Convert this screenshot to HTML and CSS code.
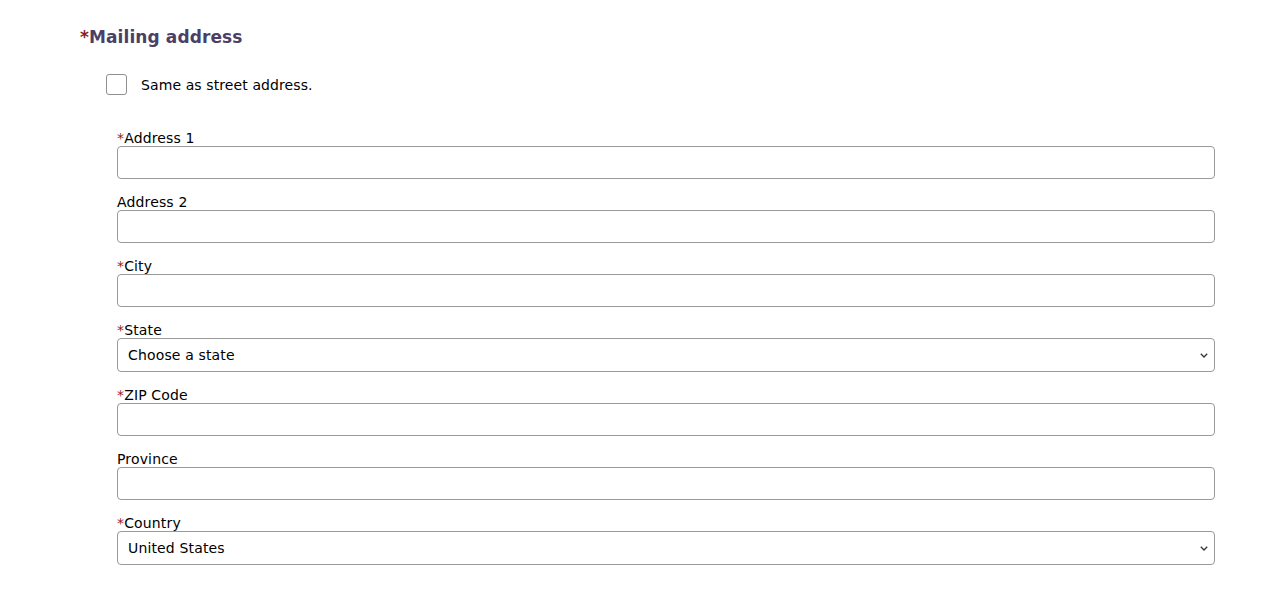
FILE: index.html
```html
<!DOCTYPE html>
<html lang="en">
<head>
<meta charset="utf-8">
<title>Mailing address</title>
<link rel="stylesheet" href="styles.css">
</head>
<body>
<form class="section">
  <h2 class="section-title"><span class="req">*</span>Mailing address</h2>
  <label class="check-row">
    <input type="checkbox" class="check">
    <span class="check-text">Same as street address.</span>
  </label>
  <div class="fields">
    <div class="field">
      <label class="field-label"><span class="req-sm">*</span>Address 1</label>
      <input type="text" class="text-input">
    </div>
    <div class="field">
      <label class="field-label">Address 2</label>
      <input type="text" class="text-input">
    </div>
    <div class="field">
      <label class="field-label"><span class="req-sm">*</span>City</label>
      <input type="text" class="text-input">
    </div>
    <div class="field">
      <label class="field-label"><span class="req-sm">*</span>State</label>
      <select class="select-input"><option>Choose a state</option></select>
    </div>
    <div class="field">
      <label class="field-label"><span class="req-sm">*</span>ZIP Code</label>
      <input type="text" class="text-input">
    </div>
    <div class="field">
      <label class="field-label">Province</label>
      <input type="text" class="text-input">
    </div>
    <div class="field">
      <label class="field-label"><span class="req-sm">*</span>Country</label>
      <select class="select-input"><option>United States</option></select>
    </div>
  </div>
</form>
</body>
</html>
```
FILE: styles.css
```css
html, body {
  margin: 0;
  padding: 0;
  background: #ffffff;
}
body {
  font-family: "DejaVu Sans", Verdana, sans-serif;
  color: #000;
}
.section {
  padding: 26px 52px 0 80px;
}
.section-title {
  margin: 0;
  font-size: 17px;
  line-height: 22px;
  font-weight: bold;
  color: #4b3f66;
  letter-spacing: 0.1px;
}
.req {
  color: #8b1c1c;
}
.req-sm {
  color: #9b1c1c;
}
.check-row {
  display: flex;
  align-items: center;
  gap: 14px;
  margin: 26px 0 0 26px;
  font-size: 14px;
  letter-spacing: 0.1px;
}
.check {
  appearance: none;
  margin: 0;
  width: 21px;
  height: 21px;
  border: 1px solid #8f8f8f;
  border-radius: 3px;
  background: #fff;
}
.fields {
  margin: 34px 0 0 37px;
  display: flex;
  flex-direction: column;
  gap: 14px;
}
.field {
  display: flex;
  flex-direction: column;
}
.field-label {
  font-size: 14px;
  line-height: 16px;
  padding-top: 1px;
  letter-spacing: 0.15px;
}
.text-input {
  box-sizing: border-box;
  height: 33px;
  width: 100%;
  margin: 0;
  border: 1px solid #999;
  border-radius: 4px;
  background: #fff;
  font: 14px "DejaVu Sans", sans-serif;
  padding: 0 10px;
}
.select-input {
  appearance: none;
  -webkit-appearance: none;
  box-sizing: border-box;
  height: 34px;
  width: 100%;
  margin: 0;
  border: 1px solid #999;
  border-radius: 4px;
  background-color: #fff;
  background-image: url("data:image/svg+xml;utf8,<svg xmlns='http://www.w3.org/2000/svg' width='8' height='5' viewBox='0 0 8 5'><path d='M0.8 0.8 L4 4 L7.2 0.8' fill='none' stroke='%23333' stroke-width='1.3'/></svg>");
  background-repeat: no-repeat;
  background-position: right 6px center;
  background-size: 8px 5px;
  font: 14px "DejaVu Sans", sans-serif;
  letter-spacing: 0.15px;
  color: #000;
  padding: 0 24px 0 10px;
}
```
